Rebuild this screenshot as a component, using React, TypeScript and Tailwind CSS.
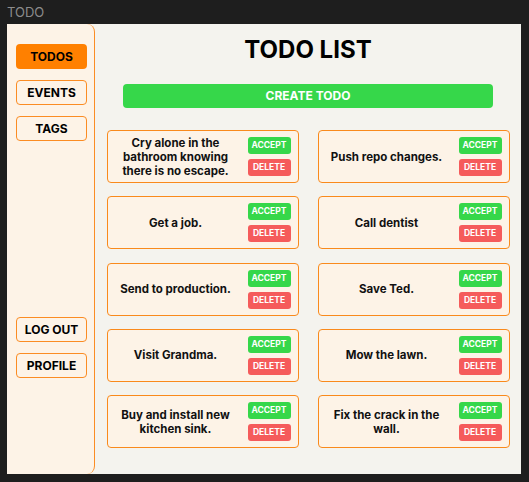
import React from 'react';

const todos: string[] = [
    'Cry alone in the bathroom knowing there is no escape.',
    'Push repo changes.',
    'Get a job.',
    'Call dentist',
    'Send to production.',
    'Save Ted.',
    'Visit Grandma.',
    'Mow the lawn.',
    'Buy and install new kitchen sink.',
    'Fix the crack in the wall.',
];

const SideButton: React.FC<{ label: string; active?: boolean }> = ({ label, active }) => (
    <button
        className={`flex h-[25px] w-[71px] items-center justify-center rounded-[4px] text-[12px] font-bold text-black ${active
                ? 'bg-[#ff8000]'
                : 'border-[1.5px] border-[#fb8c23] bg-[#fdf3e7]'
            }`}
    >
        {label}
    </button>
);

const TodoCard: React.FC<{ text: string }> = ({ text }) => (
    <div className="flex h-[53px] items-center rounded-[4px] border-[1.5px] border-[#f98a1c] bg-[#fdf3e7] pl-0 pr-[7px]">
        <p className="flex-1 px-1 text-center text-[11.5px] font-bold leading-[14px] text-[#111]">{text}</p>
        <div className="ml-[4px] flex flex-col gap-[5px]">
            <button className="flex h-[17px] w-[43px] items-center justify-center rounded-[3px] bg-[#36d74a] text-[8.5px] font-bold text-white">
                ACCEPT
            </button>
            <button className="flex h-[17px] w-[43px] items-center justify-center rounded-[3px] bg-[#f55b5b] text-[8.5px] font-bold text-white">
                DELETE
            </button>
        </div>
    </div>
);

export default function App() {
    return (
        <div className="h-[482px] w-[529px] overflow-hidden bg-[#1e1e1e] font-['Inter',sans-serif]">
            <div className="h-[24px] pl-[7px] pt-[5px] text-[13px] leading-[15px] text-[#8c8c8c]">TODO</div>
            <div className="ml-[7px] flex h-[450px] w-[514px] bg-[#f4f3ee]">
                {/* Sidebar */}
                <aside className="flex w-[88px] flex-col justify-between rounded-r-[8px] border-r-[1.5px] border-[#fb8c23] bg-[#fdf3e7] pb-[96px] pl-[9px] pt-[20px]">
                    <div className="flex flex-col gap-[11px]">
                        <SideButton label="TODOS" active />
                        <SideButton label="EVENTS" />
                        <SideButton label="TAGS" />
                    </div>
                    <div className="flex flex-col gap-[11px]">
                        <SideButton label="LOG OUT" />
                        <SideButton label="PROFILE" />
                    </div>
                </aside>

                {/* Main */}
                <main className="flex flex-1 flex-col items-center pt-[10px]">
                    <h1 className="text-[24px] font-bold leading-[32px] text-black">TODO LIST</h1>
                    <button className="mt-[18px] flex h-[24px] w-[370px] items-center justify-center rounded-[4px] bg-[#36d74a] text-[12px] font-bold text-white">
                        CREATE TODO
                    </button>
                    <div className="mt-[22px] grid w-[403px] grid-cols-2 gap-x-[19px] gap-y-[13.25px]">
                        {todos.map((t) => (
                            <TodoCard key={t} text={t} />
                        ))}
                    </div>
                </main>
            </div>
        </div>
    );
}
